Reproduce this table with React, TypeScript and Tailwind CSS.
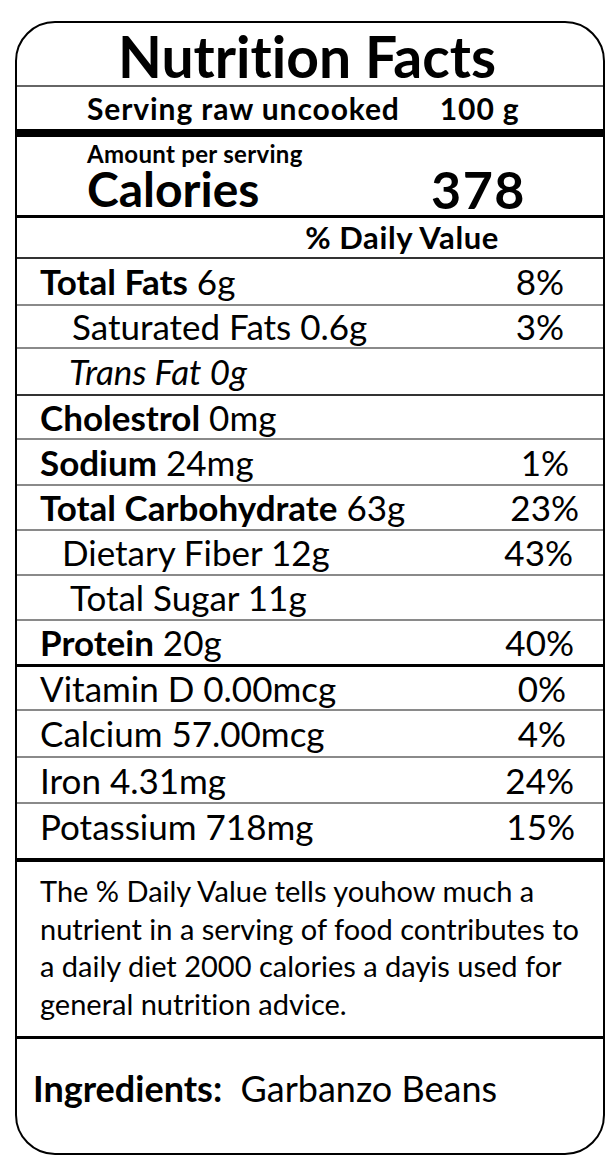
import React from "react";

type Row = {
  label: string;
  amount?: string;
  dv?: string;
  bold?: boolean;
  italic?: boolean;
  indent: string;
  pr: string;
  h: string;
  line: string;
};

const rows: Row[] = [
  { label: "Total Fats", amount: "6g", dv: "8%", bold: true, indent: "pl-[23px]", pr: "pr-[39px]", h: "h-[47px]", line: "border-b-2 border-[#8a8a8a]" },
  { label: "Saturated Fats 0.6g", dv: "3%", indent: "pl-[55px]", pr: "pr-[39px]", h: "h-[43px]", line: "border-b-2 border-[#8a8a8a]" },
  { label: "Trans Fat 0g", italic: true, indent: "pl-[52px]", pr: "pr-[39px]", h: "h-[47px]", line: "border-b-2 border-[#333]" },
  { label: "Cholestrol", amount: "0mg", bold: true, indent: "pl-[23px]", pr: "pr-[39px]", h: "h-[44px]", line: "border-b-2 border-[#8a8a8a]" },
  { label: "Sodium", amount: "24mg", dv: "1%", bold: true, indent: "pl-[23px]", pr: "pr-[34px]", h: "h-[46px]", line: "border-b-2 border-[#8a8a8a]" },
  { label: "Total Carbohydrate", amount: "63g", dv: "23%", bold: true, indent: "pl-[23px]", pr: "pr-[24px]", h: "h-[45px]", line: "border-b-2 border-[#8a8a8a]" },
  { label: "Dietary Fiber 12g", dv: "43%", indent: "pl-[45px]", pr: "pr-[30px]", h: "h-[45px]", line: "border-b-2 border-[#8a8a8a]" },
  { label: "Total Sugar 11g", indent: "pl-[53px]", pr: "pr-[30px]", h: "h-[45px]", line: "border-b-2 border-[#8a8a8a]" },
  { label: "Protein", amount: "20g", dv: "40%", bold: true, indent: "pl-[23px]", pr: "pr-[29px]", h: "h-[46px]", line: "border-b-[3px] border-black" },
  { label: "Vitamin D 0.00mcg", dv: "0%", indent: "pl-[23px]", pr: "pr-[37px]", h: "h-[44px]", line: "border-b-2 border-[#8a8a8a]" },
  { label: "Calcium 57.00mcg", dv: "4%", indent: "pl-[23px]", pr: "pr-[37px]", h: "h-[47px]", line: "border-b-2 border-[#8a8a8a]" },
  { label: "Iron 4.31mg", dv: "24%", indent: "pl-[23px]", pr: "pr-[29px]", h: "h-[46px]", line: "border-b-2 border-[#8a8a8a]" },
];

const NutrientRow = ({ row }: { row: Row }) => (
  <div className={`flex items-center justify-between ${row.h} ${row.line} ${row.indent} ${row.pr}`}>
    <span className={`text-[35px] leading-none ${row.italic ? "italic" : ""}`}>
      {row.bold ? <span className="font-bold">{row.label}</span> : row.label}
      {row.amount ? ` ${row.amount}` : ""}
    </span>
    {row.dv && <span className="text-[35px] leading-none">{row.dv}</span>}
  </div>
);

export default function App() {
  return (
    <div
      className="min-h-[1172px] bg-white pt-[21px] pl-[15px] text-black [font-variant-ligatures:none]"
      style={{ fontFamily: "Lato, 'Open Sans', sans-serif" }}
    >
      <div className="w-[590px] h-[1134px] border-2 border-black rounded-[40px] overflow-hidden flex flex-col">
        {/* title */}
        <div className="h-[64px] border-b-2 border-[#666] flex items-center justify-center">
          <h1 className="text-[57px] font-bold leading-none pt-[5px] ml-[-6px]">Nutrition Facts</h1>
        </div>

        <div className="h-[42px] border-b-[8px] border-black box-content flex items-center pl-[70px] gap-[40px]">
          <span className="text-[30px] font-bold leading-none tracking-[0.9px]">Serving raw uncooked</span>
          <span className="text-[30px] font-bold leading-none tracking-[0.9px]">100 g</span>
        </div>

        {/* calories */}
        <div className="h-[81px] border-b-[3px] border-black flex flex-col pl-[70px] pr-[77px] pt-[6px]">
          <span className="text-[24px] font-bold leading-[22px] tracking-[0.3px]">Amount per serving</span>
          <div className="flex items-end justify-between mt-[2px]">
            <span className="text-[48px] font-bold leading-[44px]">Calories</span>
            <span className="text-[52px] font-bold leading-[44px] tracking-[1.5px]">378</span>
          </div>
        </div>

        <div className="h-[41px] border-b-2 border-[#333] flex items-center justify-end pr-[104px]">
          <span className="text-[31px] font-bold leading-none tracking-[0.6px]">% Daily Value</span>
        </div>

        {rows.map((r) => (
          <NutrientRow key={r.label} row={r} />
        ))}

        <div className="h-[58px] border-b-4 border-black">
          <div className="h-[44px] flex items-center justify-between pl-[23px] pr-[28px]">
            <span className="text-[35px] leading-none">Potassium 718mg</span>
            <span className="text-[35px] leading-none">15%</span>
          </div>
        </div>

        <div className="h-[177px] border-b-[3px] border-black pl-[23px] pr-[6px] pt-[10px]">
          <p className="text-[29px] leading-[37.5px]">
            The % Daily Value tells youhow much a nutrient in a serving of food contributes to a daily diet 2000 calories a dayis used for general nutrition advice.
          </p>
        </div>

        <div className="flex-1 pl-[16px] pt-[30px]">
          <p className="text-[36px] leading-[38px]">
            <span className="font-bold">Ingredients:</span>&nbsp; Garbanzo Beans
          </p>
        </div>
      </div>
    </div>
  );
}
